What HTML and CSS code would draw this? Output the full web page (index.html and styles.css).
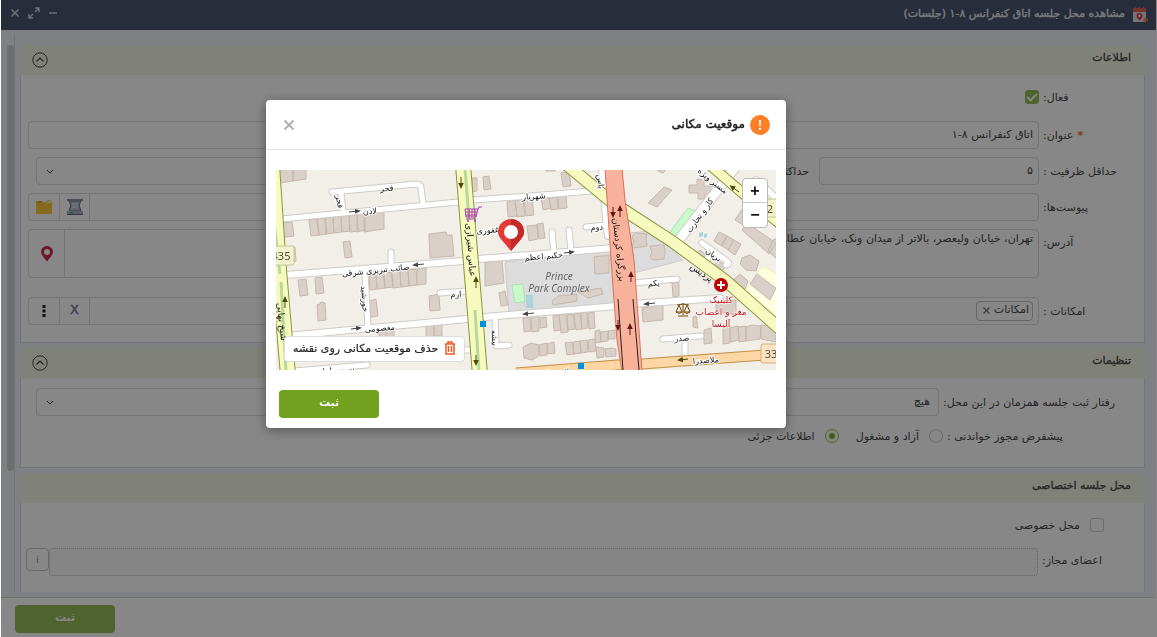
FILE: index.html
```html
<!DOCTYPE html>
<html lang="fa" dir="rtl">
<head>
<meta charset="utf-8">
<title>مشاهده محل جلسه</title>
<link rel="stylesheet" href="styles.css">
</head>
<body>
<div class="window">
  <header class="titlebar">
    <svg class="app-icon" width="16" height="16" viewBox="0 0 16 16" aria-hidden="true">
      <rect x="0" y="2" width="13" height="13" fill="#d9dce2"/>
      <path d="M0 1h13v4H0z" fill="#e0604f"/>
      <path d="M2.500 0v2M6.500 0v2M10.500 0v2" stroke="#e0604f"/>
      <path d="M6.500 13.500c-2-2.500-3-3.200-3-4.600a3 3 0 0 1 6 0c0 1.400-1 2.100-3 4.600z" fill="#d9344a"/>
      <circle cx="6.500" cy="8.800" r="1.200" fill="#fff"/>
      <path d="M12.500 10.500v5M10.300 11.700l4.400 2.600M14.700 11.700l-4.400 2.600" stroke="#f08040" stroke-width="1.300"/>
    </svg>
    <h1 class="titlebar-text">مشاهده محل جلسه اتاق کنفرانس ۸-۱ (جلسات)</h1>
    <div class="window-tools">
      <button class="tool" type="button" aria-label="کوچک کردن"><svg width="12" height="12" viewBox="0 0 12 12"><path d="M2 6h8" stroke="currentColor" stroke-width="1.500"/></svg></button>
      <button class="tool" type="button" aria-label="بزرگ کردن"><svg width="12" height="12" viewBox="0 0 12 12"><path d="M7 1h4v4M11 1L7 5M5 11H1V7M1 11l4-4" fill="none" stroke="currentColor" stroke-width="1.500"/></svg></button>
      <button class="tool" type="button" aria-label="بستن پنجره"><svg width="12" height="12" viewBox="0 0 12 12"><path d="M2.500 2.500l7 7M9.500 2.500l-7 7" stroke="currentColor" stroke-width="1.700"/></svg></button>
    </div>
  </header>

  <div class="content">
    <main class="sections">
      <section class="section">
        <div class="section-head">
          <h2 class="section-title">اطلاعات</h2>
          <button class="collapse" type="button" aria-label="جمع کردن"><svg width="16" height="16" viewBox="0 0 16 16"><circle cx="8" cy="8" r="7.200" fill="none" stroke="currentColor"/><path d="M4.500 9.500L8 6l3.500 3.500" fill="none" stroke="currentColor" stroke-width="1.200"/></svg></button>
        </div>
        <div class="section-body">
          <div class="row row-check">
            <label class="label" for="active">فعال:</label>
            <input class="check" type="checkbox" id="active" checked>
          </div>
          <div class="row">
            <label class="label" for="name"><span class="required">*</span> عنوان:</label>
            <input class="field" id="name" type="text" value="اتاق کنفرانس ۸-۱">
          </div>
          <div class="row">
            <label class="label" for="min">حداقل ظرفیت :</label>
            <input class="field field-short" id="min" type="text" value="۵">
            <label class="label-inner" for="max">حداکثر ظرفیت :</label>
            <div class="select-wrap"><select class="field" id="max"><option></option></select><svg class="arrow" width="8" height="6" viewBox="0 0 8 6"><path d="M1 1l3 3 3-3" fill="none" stroke="currentColor"/></svg></div>
          </div>
          <div class="row">
            <label class="label" for="files">پیوست‌ها:</label>
            <div class="group">
              <input class="group-input" id="files" type="text">
              <button class="group-btn" type="button" aria-label="اسکن"><svg width="16" height="17" viewBox="0 0 16 17"><path d="M2 2h12l-2 4 2 6H2l2-6z" fill="#b9bfcc" stroke="#646877"/><path d="M0 0h16v2H0z" fill="#8b91a3"/><path d="M5 5h6M5 8h5" stroke="#e4e7ee"/><path d="M0 12h16v4H0z" fill="#aab0bf"/><path d="M0 15.500h16" stroke="#646877"/><path d="M3 14h3" stroke="#3fae9d" stroke-width="1.500"/></svg></button>
              <button class="group-btn" type="button" aria-label="پوشه"><svg width="16" height="14" viewBox="0 0 16 14"><path d="M0 1h6l1 2h9v11H0z" fill="#f8c93c"/><path d="M6 1l1 2h3l1-2h4v2" fill="none" stroke="#f8c93c"/><path d="M1 2h4" stroke="#d2a01c"/></svg></button>
            </div>
          </div>
          <div class="row row-address">
            <label class="label" for="address">آدرس:</label>
            <div class="group group-tall">
              <textarea class="group-input" id="address">تهران، خیابان ولیعصر، بالاتر از میدان ونک، خیابان عطار،</textarea>
              <button class="group-btn group-btn-wide" type="button" aria-label="موقعیت"><svg width="12" height="16" viewBox="0 0 12 16"><path fill-rule="evenodd" d="M6 15.500C2 10 0 8.500 0 6a6 6 0 0 1 12 0c0 2.500-2 4-6 9.500zM6 9a3 3 0 1 0 0-6 3 3 0 0 0 0 6z" fill="#d02848"/></svg></button>
            </div>
          </div>
          <div class="row">
            <label class="label" for="tags">امکانات :</label>
            <div class="group">
              <span class="tag">امکانات <button class="tag-x" type="button" aria-label="حذف"><svg width="7" height="7" viewBox="0 0 7 7"><path d="M.5.5l6 6M6.500.5l-6 6" stroke="currentColor" stroke-width="1.300"/></svg></button></span>
              <input class="group-input" id="tags" type="text">
              <button class="group-btn clear" type="button">X</button>
              <button class="group-btn" type="button" aria-label="بیشتر"><svg width="4" height="12" viewBox="0 0 4 12"><path d="M.5 0h3v3h-3zM.5 4.500h3v3h-3zM.5 9h3v3h-3z" fill="#222"/></svg></button>
            </div>
          </div>
        </div>
      </section>

      <section class="section">
        <div class="section-head">
          <h2 class="section-title">تنظیمات</h2>
          <button class="collapse" type="button" aria-label="جمع کردن"><svg width="16" height="16" viewBox="0 0 16 16"><circle cx="8" cy="8" r="7.200" fill="none" stroke="currentColor"/><path d="M4.500 9.500L8 6l3.500 3.500" fill="none" stroke="currentColor" stroke-width="1.200"/></svg></button>
        </div>
        <div class="section-body settings">
          <div class="row">
            <label class="label label-wide" for="mode">رفتار ثبت جلسه همزمان در این محل:</label>
            <div class="select-wrap"><select class="field" id="mode"><option>هیچ</option></select><svg class="arrow" width="8" height="6" viewBox="0 0 8 6"><path d="M1 1l3 3 3-3" fill="none" stroke="currentColor"/></svg></div>
          </div>
          <div class="row radios">
            <span class="label label-wide">پیشفرض مجوز خواندنی :</span>
            <input class="radio" type="radio" name="perm" id="busy"><label class="choice" for="busy">آزاد و مشغول</label>
            <input class="radio" type="radio" name="perm" id="partial" checked><label class="choice" for="partial">اطلاعات جزئی</label>
          </div>
        </div>
      </section>

      <section class="section">
        <div class="section-head"><h2 class="section-title">محل جلسه اختصاصی</h2></div>
        <div class="section-body private">
          <div class="row row-private">
            <input class="check" type="checkbox" id="private"><label for="private">محل خصوصی</label>
          </div>
          <div class="row row-members">
            <label class="label" for="members">اعضای مجاز:</label>
            <input class="field field-dotted" id="members" type="text" disabled>
            <button class="info" type="button">i</button>
          </div>
        </div>
      </section>
    </main>
    <div class="scroll-track"><div class="scroll-thumb"></div></div>
  </div>

  <footer class="footer"><button class="submit" type="button">ثبت</button></footer>
</div>

<div class="backdrop">
  <div class="dialog" role="dialog" aria-labelledby="dialog-title">
    <div class="dialog-head">
      <svg width="20" height="20" viewBox="0 0 20 20" aria-hidden="true"><circle cx="10" cy="10" r="10" fill="#ff7f27"/><path d="M9 5h2l-.4 6.500H9.400zM9 13h2v2H9z" fill="#fff"/></svg>
      <h2 class="dialog-title" id="dialog-title">موقعیت مکانی</h2>
      <button class="dialog-close" type="button" aria-label="بستن"><svg width="12" height="12" viewBox="0 0 12 12"><path d="M1.500 1.500l9 9M10.500 1.500l-9 9" stroke="currentColor" stroke-width="2"/></svg></button>
    </div>
    <div class="dialog-body">
      <div class="map">
        <svg class="map-canvas" viewBox="0 0 500 200">
          <defs>
            <marker id="tip" markerUnits="userSpaceOnUse" markerWidth="6" markerHeight="6" refX="3" refY="3" orient="auto"><path d="M0 .5L6 3 0 5.500z" fill="#444"/></marker>
            <marker id="tip-olive" markerUnits="userSpaceOnUse" markerWidth="6" markerHeight="6" refX="3" refY="3" orient="auto"><path d="M0 .2L6 3 0 5.800z" fill="#4c4a08"/></marker>
            <marker id="tip-red" markerUnits="userSpaceOnUse" markerWidth="6" markerHeight="6" refX="3" refY="3" orient="auto"><path d="M0 .2L6 3 0 5.800z" fill="#6b1212"/></marker>
            <g id="streets">
              <path d="M5 49L182 32M197 30L254 26 328 20M56 22L140 14Q145 14 145 18L147 34M65 22L67 41M115 82v11M89 104L92 157M164 123L191 121M18 201L91 195M219 148L220 176 233 175M310 57L331 55M276 62L278 83M293 60L295 80M426 73L451 91Q455 94 450 95M437 83L424 96M357 113L401 109M387 169L425 166M409 168V189M189 180H198"/>
            </g>
            <g id="avenues">
              <path d="M10 105L187 91M202 89L254 85 337 78M0 167L191 149M209 147L342 136M356 134L444 128M326 -2Q328 30 332 66M480 10L502 30"/>
            </g>
          </defs>
          <rect class="land" width="500" height="200"/>
          <path class="park" d="M229 92L337 79 342 135 233 143zM351 63L377 61 407 90 358 103z"/>
          <path class="green" d="M388 70L403 50 412 38 424 43 400 76zM236 115l11-1 2 18-10 1z"/>
          <path class="plot" d="M486 96L502 105V147L466 125z"/>
          <path class="water" d="M250 125h7v13h-7zM423 63l4-1v4l-4 1zM428 64l3-1v4l-3 1z"/>
          <g class="building">
            <path d="M3-2h14v13l-13 2zM17-2h13v11l-13 2zM7 53l9-1 2 14-10 1zM7 79l12-2 1 14-12 2z"/>
            <path d="M33 50l8-1 2 16-8 1zM41 49l8-1 2 16-8 1zM49 48l8-1 1 16-8 1zM57 47l8-1 1 16-8 1zM65 46l8-1 1 16-8 1zM73 46l8-1 1 16-8 1zM81 45l8-1v16l-8 2zM88 44l20-2v17l-20 3z"/>
            <path d="M67 72l7-1 2 16-7 1zM153 64l17-2 1 3h5l2 21-24 2zM196 8h5v13l-5 1zM207 7l6-1 2 13-7 1z"/>
            <path d="M22 110l8-1 2 16-8 1zM39 108l7-1 2 16-8 1zM41 135l3-1 1-2 4 1 1 17-8 1zM93 131l7-2 2 17-7 1zM93 105l7-1 1 15-7 1zM100 104l7-1 2 15-8 1zM108 103l7-1 2 15-8 1zM116 102l8-1 1 16-8 1zM124 101l8-1 1 16-8 1zM132 100l8-1 1 16-8 1zM141 99l9-1v16l-9 1z"/>
            <path d="M153 126l10-2 1 16-10 1zM150 156l8-1v12h-8zM158 155l8-1v12h-8zM103 161h7v6h-7zM111 160h7v7h-7zM209 93l17-3 2 23-19 3zM223 123l6-2 3 14-7 1z"/>
            <path d="M231 32l8-2 2 16-9 1zM239 31l8-2 2 17-8 1zM248 30l8-1 2 16-8 1zM265 28l8-1 2 11-8 2zM273 28l8-1 1 12-7 1zM282 27l8-1 1 12-8 1zM285 3l8-2 2 15-8 1zM251 56l10-1 1 14-9 2zM261 54l6-1 2 15-6 1zM270-2h9v3h-9z"/>
            <path d="M318 87l15-2v18l-14 1zM276 131l6-5 19-2v7l-24 4zM302 122l23-4 2 6-15 4z"/>
            <path d="M247 148l7-1 1 14-7 1zM255 147l8-1v15l-7 1zM264 148l6-1 1 10-7 1zM277 146l6-1 2 15-7 1zM283 145l7-1 2 18-7 1zM291 145l6-1 2 15-7 1zM298 144l6-1 2 16-6 1zM305 143l6-1 1 16-6 1zM312 143l6-1 1 16-6 1z"/>
            <path d="M247 177l8-4 8 2v11l-7 4-8-2zM263 175l8-2v12l-7 1zM271 174l7-2 1 11-7 1zM289 173l7-1 2 12-7 1zM297 172l7-1 1 12-7 1zM304 171l7-1 1 12-7 1zM312 170l7-1 1 12-7 1zM319 161l5-1 1 12-6 1zM325 162l7-1v10l-7 1zM332 161l7-1v9h-7zM320 177l8 1v9l-7 1zM329 179l7-1 4 1v7l-10 1z"/>
            <path d="M356 66l4-3 11 1-1 4 1 8-14 2-1-3 2-3zM374 76l14-1 1 5-1 9-11 1-3-3 2-5z"/>
            <path d="M413 15h8V9l7 1v6h11v8h-10v5h-7v-6h-9zM388 17l8 3-15 17-9-4zM382-2h9l-4 5-5-2z"/>
            <path d="M443 62l8 4-5 10-8-5zM451 66l7 4-6 10-7-5zM458 70l7 4-6 11-7-5zM418 85l6-5 8 6-5 7zM443 91l8 5-7 6-8-5zM466 88l8-3 9 6-3 10-10-1-6-6zM464 104l8 7-3 8-10-1-3-7zM481 104l19 14-6 12-20-16z"/>
            <path d="M459 50l12-18 8 3-12 20zM466 60l5-7 29 20-7 11zM497 70l5-2v22l-10-9z"/>
            <path d="M366 138l21-3v15l-20 2zM396 113l7-1v14l-6 1zM417 147l3-1 2 12-5-1zM428 160l7-2 1 15-8 1zM440 132l20-2v15l-20-4zM447 156l7-1v18l-7 1zM454 158l8-2 1 14-8 2zM462 157l8-1v15l-7 1zM470 157l6-2 9 1-1 13-14 2zM485 155l9 1 6 5v11l-15-3z"/>
          </g>
          <use href="#streets" class="case case-street"/>
          <use href="#avenues" class="case case-avenue"/>
          <path class="case case-wide" d="M461-5L399 75"/>
          <use href="#streets" class="fill fill-street"/>
          <use href="#avenues" class="fill fill-avenue"/>
          <path class="fill fill-wide" d="M461-5L399 75"/>
          <path class="orange-case" d="M240 203L341 195 366 194 502 184"/>
          <path class="orange" d="M240 203L341 195 366 194 502 184"/>
          <g class="yellow-case"><path class="w16" d="M-4-5L3 100 12 205M187-5L204 205"/><path class="w12" d="M291-5L337 33 397 72 450 111 504 159"/><path class="w9" d="M434-5L470 26 504 54"/></g>
          <g class="yellow"><path class="w16" d="M-4-5L3 100 12 205M187-5L204 205"/><path class="w12" d="M291-5L337 33 397 72 450 111 504 159"/><path class="w9" d="M434-5L470 26 504 54"/></g>
          <path class="verge" d="M189-2L193 50M199 140L203 202M5 112L10 202M-1 60L4 104"/>
          <path class="highway" d="M329-2H346L349 30 358 90 366 202H346L341 170 335 90z"/>
          <path class="rail" d="M342 129L347 200M357 129L363 200"/>
          <g class="way">
            <path d="M73 42l9-1"/><path d="M148 94l-9 1"/><path d="M75 159l8-1"/><path d="M258 143l-9 1"/><path d="M288 83l8-1"/><path d="M379 133l-9 1"/>
            <g class="olive"><path d="M185 7v9"/><path d="M200 118v-9"/><path d="M200 185v8"/><path d="M9 138v-9"/><path d="M463 22l-7-5"/><path d="M412 189l-8 1"/></g>
            <g class="red"><path d="M344 47v-9"/><path d="M337 37v8"/><path d="M355 112v-8"/><path d="M354 165v-9"/><path d="M342 150v8"/></g>
          </g>
          <g class="names">
            <text transform="translate(111 21) rotate(-4)">فجر</text>
            <text transform="translate(61 32) rotate(80)">فجر</text>
            <text transform="translate(94 44) rotate(-4)">لادن</text>
            <text transform="translate(258 29) rotate(-4)">شهریار</text>
            <text transform="translate(212 63) rotate(-5)">غفوری</text>
            <text transform="translate(100 103) rotate(-6)">صائب تبریزی شرقی</text>
            <text transform="translate(268 89) rotate(-5)">حکیم اعظم</text>
            <text transform="translate(321 60) rotate(-4)">دوم</text>
            <text transform="translate(322 12) rotate(83)">یاس</text>
            <text transform="translate(86 129) rotate(86)">خورشید</text>
            <text transform="translate(180 127) rotate(-3)">ارم</text>
            <text transform="translate(104 161) rotate(-5)">معصومی</text>
            <text transform="translate(216 168) rotate(87)">بیشه</text>
            <text transform="translate(378 116) rotate(-4)">یکم</text>
            <text transform="translate(406 171) rotate(-3)">صدر</text>
            <text transform="translate(430 193) rotate(-4)">ملاصدرا</text>
            <text transform="translate(60 203) rotate(-5)">سی سامان</text>
            <text transform="translate(285 205) rotate(-5)">ملاصدرا</text>
            <text transform="translate(192 80) rotate(86)" class="big">عباس شیرازی</text>
            <text transform="translate(340 80) rotate(84)" class="big">بزرگراه کردستان</text>
            <text transform="translate(3 152) rotate(84)" class="big">شیخ بهایی</text>
            <text transform="translate(426 47) rotate(-54)">کار و تجارت</text>
            <text transform="translate(436 87) rotate(35)">بریان</text>
            <text transform="translate(424 105) rotate(35)" class="big">پردیس</text>
            <text transform="translate(435 13) rotate(39)">مسیر ویژه</text>
          </g>
          <g class="park-name"><text x="283" y="110">Prince</text><text x="283" y="122">Park Complex</text></g>
          <g class="clinic"><text x="445" y="133">کلینیک</text><text x="445" y="145">مغز و اعصاب</text><text x="445" y="157">آلیسا</text></g>
          <circle cx="445" cy="115" r="7" fill="#bf0000"/><path d="M445 111v8M441 115h8" stroke="#fff" stroke-width="2"/>
          <path class="scales" d="M407 133v12M402 146h10M401 135q6-2 12 0M403 135l-3 7M403 135l3 7M411 135l-3 7M411 135l3 7M400 142q3 3 6 0zM408 142q3 3 6 0z"/>
          <path class="cart" d="M189 39h13l-2 8h-10zM202 39l1-2h3M190 49h10M190 42h11M190 45h10M193 39v8M196 39v8M199 39v8"/><circle cx="192" cy="51" r="1" fill="#ac39ac"/><circle cx="199" cy="51" r="1" fill="#ac39ac"/>
          <path d="M204 151h6v6h-6zM302 193h6v6h-6z" fill="#0092da"/>
          <g class="shield"><rect x="-4" y="76" width="22" height="19" rx="2"/><rect x="490" y="29" width="22" height="18" rx="2"/><rect class="shield-orange" x="485" y="174" width="25" height="19" rx="2"/><text x="5" y="90">435</text><text x="494" y="43">2</text><text x="495" y="188">33</text></g>
          <path d="M235 81C226 70 222 67 222 62a13 13 0 0 1 26 0c0 5-4 8-13 19z" fill="#e53935"/><path d="M235 49a13 13 0 0 1 13 13c0 5-4 8-13 19z" fill="#c62828"/><circle cx="235" cy="62" r="7" fill="#fff"/>
        </svg>
        <div class="zoom"><button class="zoom-btn" type="button">+</button><button class="zoom-btn" type="button">−</button></div>
        <button class="remove" type="button"><svg width="12" height="14" viewBox="0 0 12 14"><path d="M1 3h10M4 3V1h4v2M2 3v10h8V3M4.500 5v6M7.500 5v6" fill="none" stroke="#f4581c" stroke-width="1.500"/></svg>حذف موقعیت مکانی روی نقشه</button>
      </div>
      <button class="submit submit-bright" type="button">ثبت</button>
    </div>
  </div>
</div>
</body>
</html>
```
FILE: styles.css
```css
* { box-sizing: border-box; }
html, body { height: 100%; margin: 0; }
body { background: #fff; font-family: "DejaVu Sans", sans-serif; font-size: 11px; color: #484848; overflow: hidden; }
button, input, select, textarea { font: inherit; color: inherit; margin: 0; }
button { background: none; border: 0; padding: 0; display: flex; align-items: center; justify-content: center; }
h1, h2 { margin: 0; font-size: 11px; font-weight: normal; -webkit-text-stroke: .3px currentColor; }
svg { display: block; flex: none; }

.window { height: 100%; margin: 0 1px; display: flex; flex-direction: column; background: #f0f2f7; }
.titlebar { height: 30px; flex: none; background: #4b5570; color: #e8eaf0; display: flex; align-items: center; gap: 8px; padding: 0 7px 4px 8px; }
.app-icon { margin-top: 3px; }
.titlebar-text { flex: 1; }
.window-tools { display: flex; gap: 7px; }
.tool { width: 12px; height: 12px; color: #c8ccd6; }

.content { flex: 1; min-height: 0; display: flex; overflow: hidden; }
.sections { flex: 1; padding: 15px 11px 0 5px; min-width: 0; }
.scroll-track { width: 14px; flex: none; margin-top: 5px; padding: 10px 0 0 6px; border-right: 1px solid #dcdee2; }
.scroll-thumb { height: 426px; border-radius: 4px; background: #d0d0d0; }

.section { margin-bottom: 5px; }
.section-head { height: 30px; background: #f2f5e6; display: flex; align-items: center; justify-content: space-between; padding: 0 14px 0 12px; }
.section-title { padding-bottom: 6px; }
.section-body { background: #fff; border: 1px solid #dcdee4; border-top: 0; padding: 11px 105px 17px 7px; }
.row { display: flex; align-items: center; margin-bottom: 8px; }
.row:last-child { margin-bottom: 0; }
.label { width: 104px; margin-right: -104px; padding-left: 4px; flex: none; white-space: nowrap; display: flex; justify-content: flex-end; }
.required { color: #e8752c; font-weight: bold; padding-left: 4px; }
.field { flex: 1; width: 100%; min-width: 0; height: 28px; border: 1px solid #dcdcdc; border-radius: 4px; background: #fff; padding: 0 5px 2px; appearance: none; }
select.field { padding-right: 8px; }
.row-check { height: 22px; margin-bottom: 13px; }
.check { appearance: none; width: 14px; height: 14px; margin: 0; border: 1px solid #ccc; border-radius: 3px; background: #fff; display: grid; place-items: center; }
.check:checked { border-color: #95bc5a; background: #95bc5a; }
.check:checked::after { content: ""; width: 8px; height: 4px; border: solid #fff; border-width: 0 0 2px 2px; transform: rotate(-45deg); margin-bottom: 2px; }
.field-short { flex: 0 0 220px; }
.label-inner { width: 120px; padding-right: 10px; flex: none; }
.select-wrap { flex: 1; position: relative; padding-left: 8px; }
.arrow { position: absolute; left: 18px; top: 12px; }

.group { flex: 1; min-width: 0; height: 28px; display: flex; align-items: stretch; border: 1px solid #dcdcdc; border-radius: 4px; }
.group-tall { height: 49px; }
.group-input { flex: 1; min-width: 0; border: 0; background: none; padding: 2px 5px; resize: none; overflow: hidden; }
.group-btn { width: 30px; flex: none; border-right: 1px solid #dcdcdc; }
.group-btn + .group-btn { border-right: 0; }
.group-btn:nth-last-child(2) { width: 31px; border-left: 1px solid #dcdcdc; border-right: 1px solid #dcdcdc; }
.group-btn-wide { width: 36px; }
.clear { font-size: 13px; color: #6b6f96; -webkit-text-stroke: .3px currentColor; padding-bottom: 3px; }
.row-address { margin-bottom: 19px; }
.row-address .label { align-self: flex-start; padding-top: 7px; }
.tag { display: flex; align-items: center; gap: 4px; margin: 3px 5px; padding: 0 3px 4px 6px; border: 1px solid #c0c0c0; border-radius: 4px; }
.tag-x { color: #777; padding-top: 3px; }

.settings { padding: 10px 205px 21px 7px; }
.settings .row { margin-bottom: 10px; }
.settings .row:last-child { margin-bottom: 0; }
.settings .row.radios { height: 20px; margin-right: -4px; }
.label-wide { width: 204px; margin-right: -204px; }
.radio { appearance: none; width: 14px; height: 14px; border: 1px solid #ccc; border-radius: 50%; display: grid; place-items: center; }
.radio:checked { border-color: #95bc5a; }
.radio:checked::after { content: ""; width: 6px; height: 6px; border-radius: 50%; background: #7eb030; }
.choice { margin: 0 10px 0 17px; }
.private { padding: 11px 106px 40px 5px; }
.row-private { height: 22px; margin: 0 -66px 12px 0; gap: 10px; }
.row-members { align-items: flex-start; }
.row-members .label { padding-top: 6px; }
.field-dotted { border-style: dotted; border-color: #bbb; background: #fbfbfb; }
.info { width: 23px; height: 23px; border: 1px solid #c8c8c8; border-radius: 4px; color: #888; font-size: 9px; }

.footer { flex: none; margin-top: 5px; height: 40px; background: #fff; border-top: 1px solid #d5d7da; padding: 7px 14px; display: flex; justify-content: flex-end; }
.submit { width: 100px; height: 28px; border-radius: 4px; background: #95bc5a; color: #fff; font-weight: bold; padding-bottom: 4px; }
.submit-bright { background: #72a11f; margin: 20px auto 0 3px; }

.backdrop { position: fixed; inset: 0 0 0 1px; background: rgba(0, 0, 0, .47); }
.dialog { position: absolute; top: 100px; left: 265px; width: 520px; background: #fff; border-radius: 4px; box-shadow: 0 2px 12px rgba(0, 0, 0, .4); color: #222; }
.dialog-head { height: 50px; border-bottom: 1px solid #e5e5e5; display: flex; align-items: center; gap: 5px; padding: 0 16px 0 17px; }
.dialog-title { flex: 1; font-size: 12px; -webkit-text-stroke: .5px currentColor; padding-bottom: 2px; }
.dialog-close { color: #b0b0b0; }
.dialog-body { padding: 20px 10px 10px; }

.map { position: relative; }
.map-canvas { width: 100%; overflow: hidden; }
.land { fill: #f2efe9; }
.park { fill: #dcdcdc; stroke: #ccc; }
.green { fill: #c8facc; stroke: #aedfb3; }
.plot { fill: #ffffe0; stroke: #f0f0b8; }
.water { fill: #aad3df; }
.building { fill: #d9d0c9; stroke: #c6b8ad; stroke-width: 1; }
.case, .fill { fill: none; stroke-linecap: round; stroke-linejoin: round; }
.case { stroke: #cfccc8; }
.fill { stroke: #fff; }
.case-street { stroke-width: 7; }
.fill-street { stroke-width: 5; }
.case-avenue { stroke-width: 8; }
.fill-avenue { stroke-width: 6; }
.case-wide { stroke-width: 11; }
.fill-wide { stroke-width: 9; }
.orange-case, .orange { fill: none; stroke: #c08f45; stroke-width: 11; }
.orange { stroke: #fcd6a4; stroke-width: 9; }
.yellow, .yellow-case { fill: none; stroke: #f7fabf; }
.yellow-case { stroke: #89963c; }
.yellow .w16 { stroke-width: 14; }
.yellow-case .w16 { stroke-width: 16; }
.yellow .w12 { stroke-width: 11; }
.yellow-case .w12 { stroke-width: 13; }
.yellow .w9 { stroke-width: 9; }
.yellow-case .w9 { stroke-width: 11; }
.verge { fill: none; stroke: #b9d99a; stroke-width: 3; }
.highway { fill: #f9b29c; stroke: #d9705c; }
.rail { fill: none; stroke: #222; }
.way path { fill: none; stroke: #444; marker-end: url(#tip); }
.way .olive path { stroke: #4c4a08; marker-end: url(#tip-olive); }
.way .red path { stroke: #6b1212; marker-end: url(#tip-red); }
.names text { font-size: 8px; fill: #111; stroke: #fff; stroke-width: 2px; paint-order: stroke; text-anchor: middle; }
.names .big { font-size: 9px; stroke: none; }
.park-name text { font: italic 10px "Noto Sans", sans-serif; fill: #666; text-anchor: middle; }
.clinic text { font-size: 9px; fill: #c4141c; stroke: #fff; stroke-width: 1px; paint-order: stroke; text-anchor: middle; }
.scales { fill: none; stroke: #734a08; }
.cart { fill: none; stroke: #ac39ac; }
.shield rect { fill: #f2f3cc; stroke: #c4c890; }
.shield .shield-orange { fill: #fbe3c4; stroke: #d8ae78; }
.shield text { font: 11px "Noto Sans", sans-serif; fill: #555030; text-anchor: middle; }
.zoom { position: absolute; top: 8px; right: 8px; width: 26px; border: 1px solid #bbb; border-radius: 4px; background: #fff; overflow: hidden; }
.zoom-btn { width: 100%; height: 24px; font: bold 16px "Liberation Sans", sans-serif; color: #111; }
.zoom-btn:first-child { border-bottom: 1px solid #ccc; }
.remove { position: absolute; left: 8px; bottom: 8px; height: 26px; gap: 6px; padding: 0 8px 2px; background: #fff; border: 1px solid #ddd; border-radius: 4px; color: #222; -webkit-text-stroke: .2px currentColor; }
```
